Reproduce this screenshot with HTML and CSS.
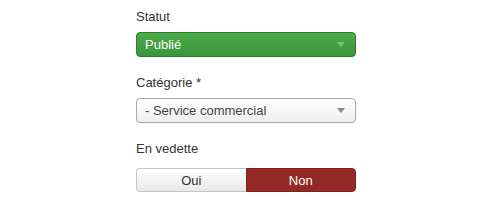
FILE: index.html
```html
<!DOCTYPE html>
<html lang="fr">
<head>
  <meta charset="UTF-8">
  <title>Options</title>
  <link rel="stylesheet" href="styles.css">
</head>
<body>
  <div class="panel">
    <div class="field">
      <label class="field-label">Statut</label>
      <div class="chzn chzn-published">
        <span>Publié</span>
        <b class="arrow"></b>
      </div>
    </div>

    <div class="field">
      <label class="field-label">Catégorie *</label>
      <div class="chzn">
        <span>- Service commercial</span>
        <b class="arrow"></b>
      </div>
    </div>

    <div class="field">
      <label class="field-label">En vedette</label>
      <div class="btn-group">
        <button type="button" class="btn">Oui</button>
        <button type="button" class="btn btn-danger">Non</button>
      </div>
    </div>
  </div>
</body>
</html>
```

FILE: styles.css
```css
body { margin: 0; font-family: "Liberation Sans", Arial, sans-serif; font-size: 13px; color: #333; background: #fff; }
.panel { padding: 8px 0 0 136px; width: 220px; }
.field { margin-bottom: 0; }
.field-label { display: block; line-height: 18px; height: 18px; margin-bottom: 6px; }
.chzn { box-sizing: border-box; height: 25px; display: flex; align-items: center; justify-content: space-between; padding: 0 8px; border: 1px solid #aaa; border-radius: 4px; background: linear-gradient(#ffffff, #eeeeee); color: #444; margin-bottom: 17px; box-shadow: 0 1px 1px rgba(0,0,0,0.05); }
.chzn span { line-height: 23px; }
.chzn .arrow { width: 0; height: 0; border-left: 4px solid transparent; border-right: 4px solid transparent; border-top: 5px solid #8a8a8a; margin-right: 2px; }
.chzn-published { border-color: #2d7a2d; background: linear-gradient(#4aab4a, #3a953a); color: #fff; }
.chzn-published .arrow { border-top-color: #7fbd7f; }
.btn-group { display: flex; margin-top: 10px; }
.btn { flex: 1; box-sizing: border-box; height: 24px; margin: 0; font-family: inherit; font-size: 13px; color: #333; border: 1px solid #c4c4c4; background: linear-gradient(#ffffff, #e8e8e8); cursor: pointer; padding: 0; }
.btn:first-child { border-radius: 4px 0 0 4px; border-right: 0; }
.btn:last-child { border-radius: 0 4px 4px 0; }
.btn-danger { background: #942a25; border-color: #7d211d; color: #fff; }
```
